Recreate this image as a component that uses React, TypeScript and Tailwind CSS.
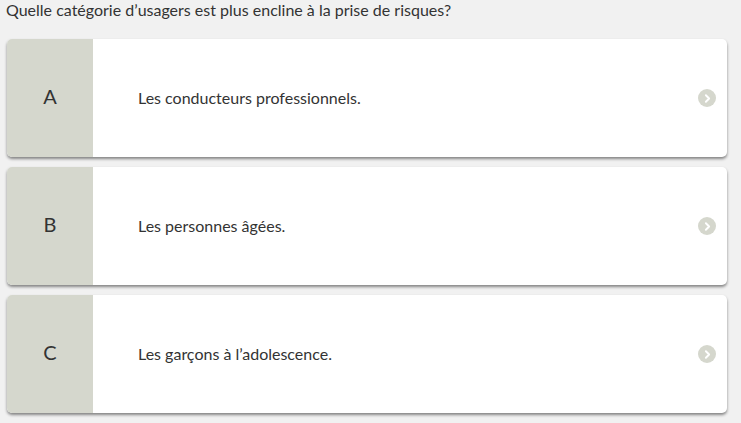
import { ChevronRight } from 'lucide-react'

type Choice = { letter: string; label: string }

const choices: Choice[] = [
  { letter: 'A', label: 'Les conducteurs professionnels.' },
  { letter: 'B', label: 'Les personnes âgées.' },
  { letter: 'C', label: 'Les garçons à l’adolescence.' },
]

function ChoiceCard({ letter, label }: Choice) {
  return (
    <div className="flex h-[118px] w-[720px] overflow-hidden rounded-[5px] bg-white shadow-[0_2px_3px_rgba(0,0,0,0.45)]">
      <div className="flex w-[86px] shrink-0 items-center justify-center bg-[#d5d7cd] pb-[4px] text-[20px] text-[#333]">
        {letter}
      </div>
      <div className="flex flex-1 items-center pb-[1px] pl-[45px] text-[16px] text-[#333]">{label}</div>
      <div className="flex w-[29px] items-center">
        <span className="flex h-[18px] w-[18px] items-center justify-center rounded-full bg-[#d5d7cd] text-white">
          <ChevronRight size={13} strokeWidth={3.5} />
        </span>
      </div>
    </div>
  )
}

export default function App() {
  return (
    <div className="h-[423px] w-[741px] bg-[#f1f1f1] font-['Lato',sans-serif]">
      <p className="pl-[6px] pt-[0px] text-[16px] leading-[19px] text-[#333]">
        Quelle catégorie d’usagers est plus encline à la prise de risques?
      </p>
      <div className="mt-[20px] flex flex-col gap-[10px] pl-[7px]">
        {choices.map((c) => (
          <ChoiceCard key={c.letter} {...c} />
        ))}
      </div>
    </div>
  )
}
